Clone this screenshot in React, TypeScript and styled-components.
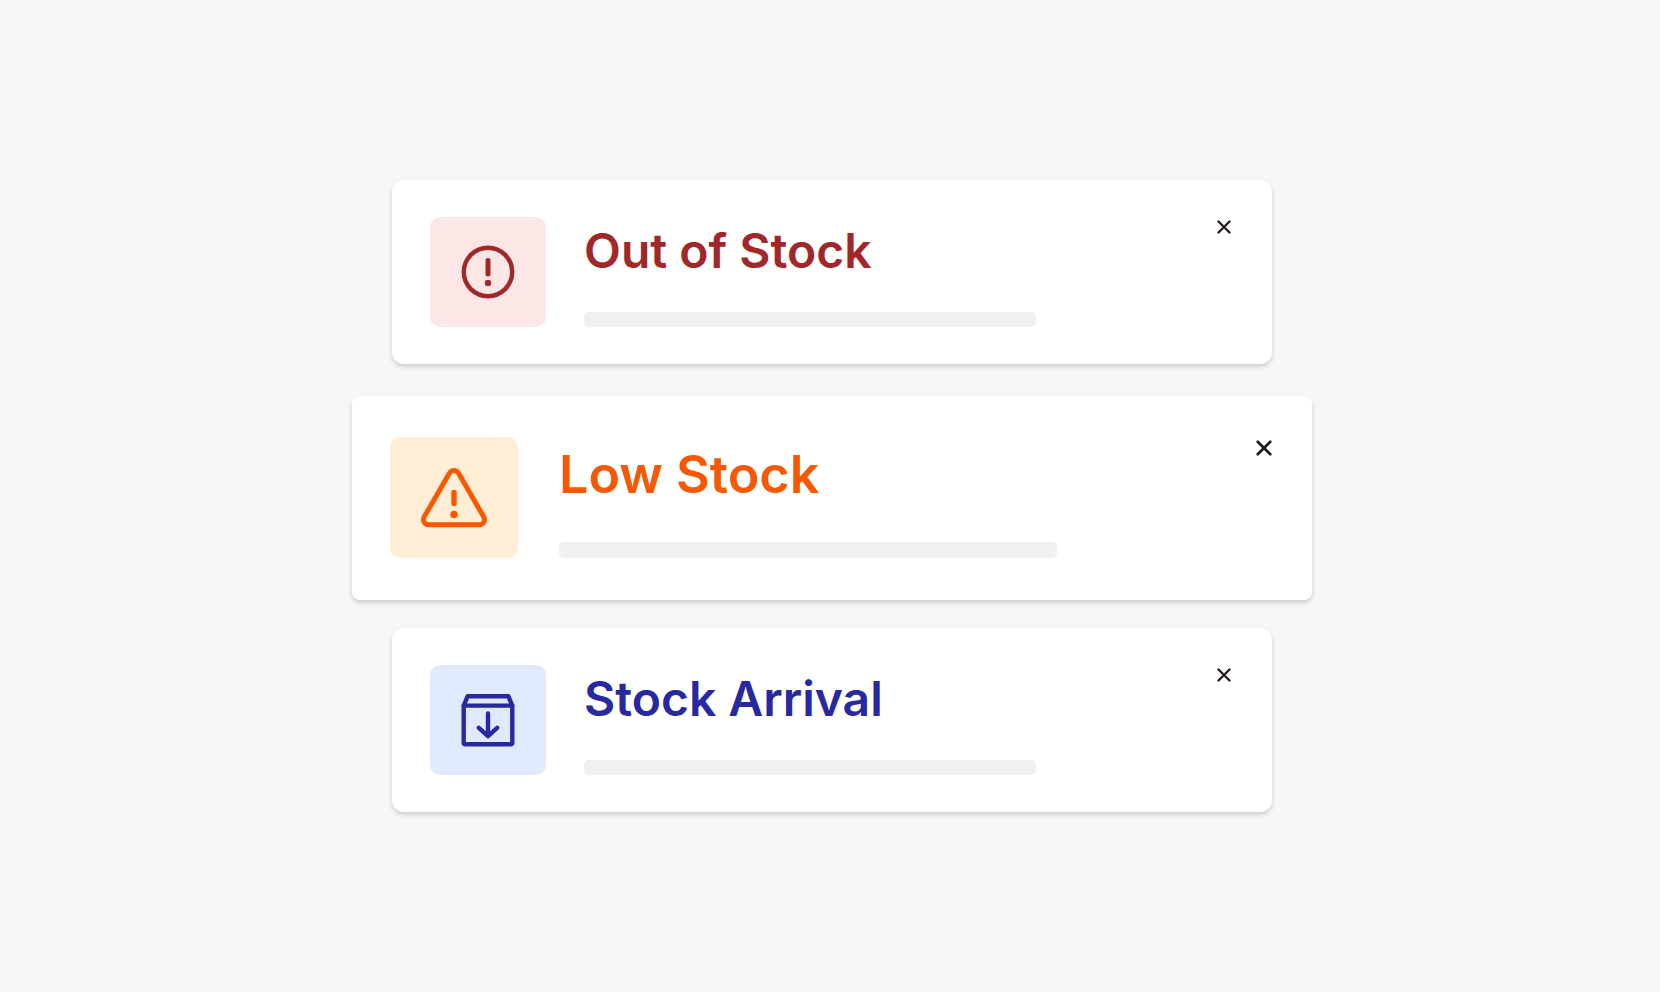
import React from "react";
import styled, { createGlobalStyle, css } from "styled-components";

const GlobalStyle = createGlobalStyle`
  *, *::before, *::after { box-sizing: border-box; }
  body {
    margin: 0;
    background: #f7f7f7;
    font-family: Inter, "Liberation Sans", sans-serif;
  }
`;

type Size = "regular" | "large";

const Page = styled.main`
  min-height: 100vh;
  display: flex;
  justify-content: center;
  align-items: center;
  padding: 24px 16px 24px 20px;
`;

const AlertList = styled.ul`
  list-style: none;
  margin: 0;
  padding: 0;
  width: 100%;
  max-width: 960px;
  display: flex;
  flex-direction: column;
`;

const regularCard = css`
  margin: 0 40px;
  padding: 37px 36px 37px 38px;
  gap: 38px;
  border-radius: 12px;
`;

const largeCard = css`
  margin: 32px 0 28px;
  padding: 41px 36px 42px 38px;
  gap: 41px;
  border-radius: 8px;
`;

const Card = styled.li<{ $size: Size }>`
  display: flex;
  background: #ffffff;
  box-shadow: 0 3px 4px rgba(0, 0, 0, 0.13), 0 2px 8px rgba(0, 0, 0, 0.05);
  ${({ $size }) => ($size === "large" ? largeCard : regularCard)}
`;

const IconTile = styled.div<{ $size: Size; $background: string; $color: string }>`
  flex: none;
  display: flex;
  align-items: center;
  justify-content: center;
  width: ${({ $size }) => ($size === "large" ? 128 : 116)}px;
  height: ${({ $size }) => ($size === "large" ? 121 : 110)}px;
  border-radius: 10px;
  background: ${({ $background }) => $background};
  color: ${({ $color }) => $color};
`;

const Content = styled.div`
  flex: 1;
  min-width: 0;
  display: flex;
  flex-direction: column;
  justify-content: space-between;
`;

const Title = styled.h2<{ $size: Size; $color: string }>`
  margin: 0;
  font-weight: 580;
  font-size: ${({ $size }) => ($size === "large" ? 52 : 48)}px;
  line-height: ${({ $size }) => ($size === "large" ? 76 : 68)}px;
  color: ${({ $color }) => $color};
`;

const Placeholder = styled.div<{ $size: Size }>`
  width: 100%;
  max-width: ${({ $size }) => ($size === "large" ? 498 : 452)}px;
  height: ${({ $size }) => ($size === "large" ? 16 : 15)}px;
  border-radius: 5px;
  background: #f0f0f0;
`;

const CloseButton = styled.button<{ $size: Size }>`
  flex: none;
  align-self: flex-start;
  display: flex;
  align-items: center;
  justify-content: center;
  width: 24px;
  height: ${({ $size }) => ($size === "large" ? 22 : 20)}px;
  padding: 0;
  border: 0;
  background: none;
  color: #21181c;
  cursor: pointer;

  svg {
    width: ${({ $size }) => ($size === "large" ? 16 : 14)}px;
    height: ${({ $size }) => ($size === "large" ? 16 : 14)}px;
  }
`;

const CircleAlertIcon = () => (
  <svg width="54" height="54" viewBox="0 0 54 54" fill="none" stroke="currentColor" aria-hidden="true">
    <circle cx="27" cy="27" r="24.2" strokeWidth="4.4" />
    <path d="M27 15.5V29" strokeWidth="5" strokeLinecap="round" />
    <circle cx="27" cy="38" r="3.2" fill="currentColor" stroke="none" />
  </svg>
);

const TriangleAlertIcon = () => (
  <svg width="68" height="62" viewBox="0 0 68 62" fill="none" stroke="currentColor" aria-hidden="true">
    <path
      d="M29.4 6.2 4.4 49.6C2.2 53.4 4.3 57.7 8.8 57.7H59.2C63.7 57.7 65.8 53.4 63.6 49.6L38.6 6.2C36.4 2.6 31.6 2.6 29.4 6.2Z"
      strokeWidth="5"
      strokeLinejoin="round"
    />
    <path d="M34 25.5V36.5" strokeWidth="5.4" strokeLinecap="round" />
    <circle cx="34" cy="47.5" r="3.8" fill="currentColor" stroke="none" />
  </svg>
);

const BoxArrivalIcon = () => (
  <svg
    width="54"
    height="54"
    viewBox="0 0 54 54"
    fill="none"
    stroke="currentColor"
    strokeWidth="4.4"
    strokeLinecap="round"
    strokeLinejoin="round"
    aria-hidden="true"
  >
    <path d="M2.7 12.6V49.6Q2.7 51.3 4.4 51.3H49.6Q51.3 51.3 51.3 49.6V12.6L47.3 3.2H6.7Z" />
    <path d="M2.7 12.6H51.3" />
    <path d="M27 20.5V43M17.8 34.8 27 43.2 36.2 34.8" />
  </svg>
);

const CloseIcon = () => (
  <svg viewBox="0 0 14 14" fill="none" stroke="currentColor" strokeWidth="2.3" strokeLinecap="round" aria-hidden="true">
    <path d="M1.5 1.5 12.5 12.5M12.5 1.5 1.5 12.5" />
  </svg>
);

interface Alert {
  title: string;
  size: Size;
  color: string;
  background: string;
  Icon: React.FC;
}

const alerts: Alert[] = [
  { title: "Out of Stock", size: "regular", color: "#a0282a", background: "#fbe7e6", Icon: CircleAlertIcon },
  { title: "Low Stock", size: "large", color: "#f75803", background: "#ffeed6", Icon: TriangleAlertIcon },
  { title: "Stock Arrival", size: "regular", color: "#2828a0", background: "#e1e9ff", Icon: BoxArrivalIcon },
];

export default function App() {
  return (
    <>
      <GlobalStyle />
      <Page>
        <AlertList>
          {alerts.map(({ title, size, color, background, Icon }) => (
            <Card key={title} $size={size}>
              <IconTile $size={size} $background={background} $color={color}>
                <Icon />
              </IconTile>
              <Content>
                <Title $size={size} $color={color}>{title}</Title>
                <Placeholder $size={size} />
              </Content>
              <CloseButton $size={size} type="button" aria-label={`Dismiss ${title}`}>
                <CloseIcon />
              </CloseButton>
            </Card>
          ))}
        </AlertList>
      </Page>
    </>
  );
}
